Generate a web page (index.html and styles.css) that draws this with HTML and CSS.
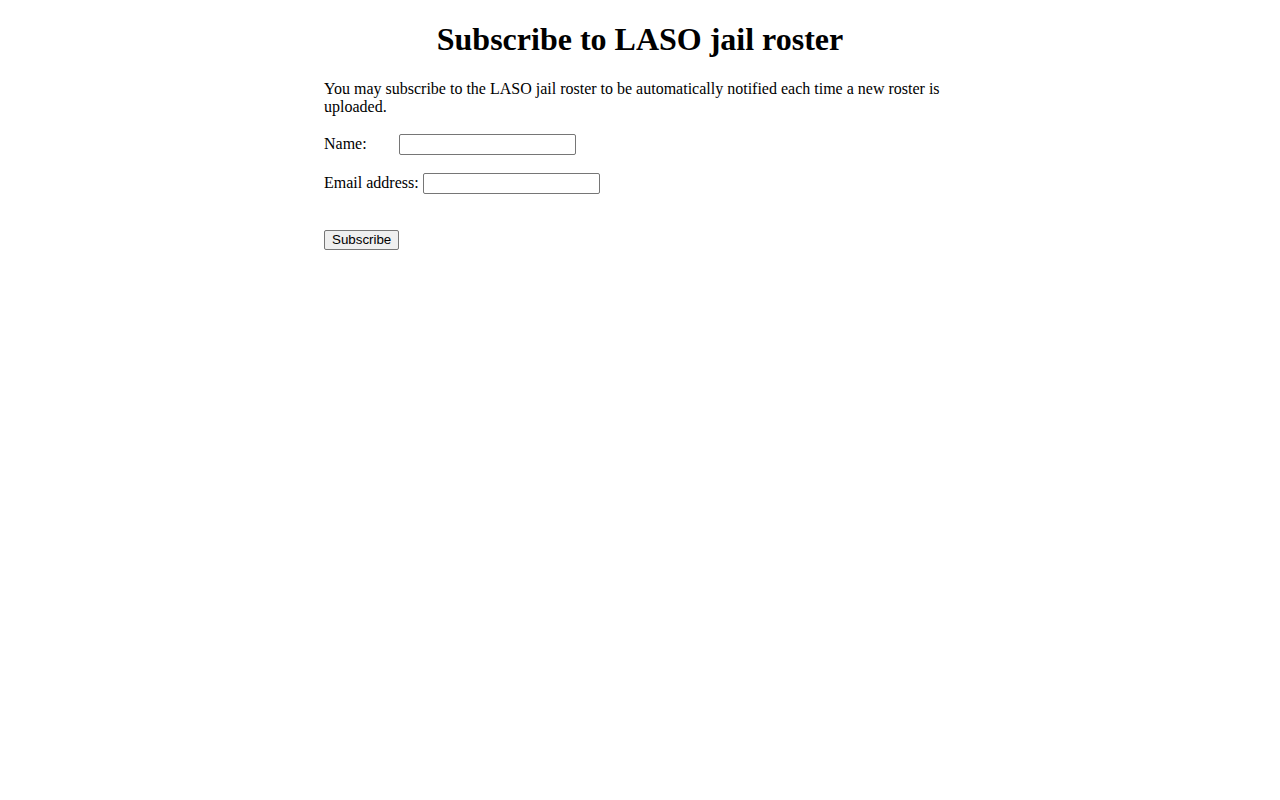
FILE: index.html
```html
<!DOCTYPE html>
<html lang="en">
<head>
<meta charset="utf-8">
<title>Subscribe to LASO jail roster</title>
<link rel="stylesheet" href="styles.css">
</head>
<body>
<div class="wrap">
  <h1 class="title">Subscribe to LASO jail roster</h1>
  <p>You may subscribe to the LASO jail roster to be automatically notified each time a new roster is uploaded.</p>
  <form class="sub-form" action="#" method="post">
    <p>Name:&nbsp;&nbsp;&nbsp;&nbsp;&nbsp;&nbsp;&nbsp; <input type="text" name="name"></p>
    <p>Email address: <input type="text" name="email"></p>
    <p><br><input type="submit" value="Subscribe"></p>
  </form>
</div>
</body>
</html>
```

FILE: styles.css
```css
body {
  margin: 0 8px 8px;
  font-family: "Liberation Serif", "Times New Roman", serif;
  font-size: 16px;
  color: #000;
  background: #fff;
}

.wrap {
  width: 50%;
  margin: 0 auto;
}

.title {
  text-align: center;
  font-size: 2em;
}

.sub-form input[type="text"] {
  font-family: "Liberation Sans", Arial, sans-serif;
  font-size: 13.333px;
  width: 171px;
  height: 17px;
  margin: 2px 0 0;
  padding: 1px 2px;
  border: 1px solid #767676;
  border-radius: 2px;
  box-sizing: content-box;
}

.sub-form input[type="submit"] {
  font-family: "Liberation Sans", Arial, sans-serif;
  font-size: 13.333px;
  height: 20px;
  margin: 2px 0 0;
  padding: 1px 7px;
  border: 1px solid #767676;
  border-radius: 2px;
  background: #efefef;
  color: #000;
}
```
